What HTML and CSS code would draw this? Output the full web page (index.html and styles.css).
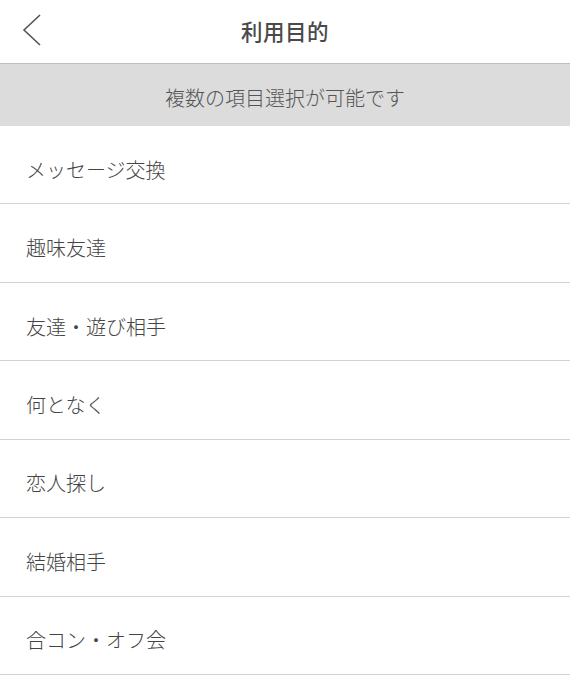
FILE: index.html
```html
<!DOCTYPE html>
<html lang="ja">
<head>
<meta charset="utf-8">
<link rel="stylesheet" href="styles.css">
</head>
<body>
<header class="nav">
  <svg class="back" width="24" height="34" viewBox="0 0 24 34"><path d="M20 2 L4 17 L20 32" fill="none" stroke="#555" stroke-width="1.6"/></svg>
  <h1 class="title">利用目的</h1>
</header>
<div class="note">複数の項目選択が可能です</div>
<ul class="list">
  <li class="item">メッセージ交換</li>
  <li class="item">趣味友達</li>
  <li class="item">友達・遊び相手</li>
  <li class="item">何となく</li>
  <li class="item">恋人探し</li>
  <li class="item">結婚相手</li>
  <li class="item">合コン・オフ会</li>
</ul>
</body>
</html>
```
FILE: styles.css
```css
html, body {
  margin: 0;
  padding: 0;
  background: #fff;
  font-family: "Noto Sans CJK JP", "Noto Sans", sans-serif;
  color: #444;
}
.nav {
  height: 63px;
  border-bottom: 1px solid #bdbdbd;
  display: flex;
  align-items: center;
  justify-content: center;
  position: relative;
}
.back {
  position: absolute;
  left: 20px;
  top: 13px;
}
.title {
  margin: 0 0 3px 0;
  font-size: 21.5px;
  font-weight: 500;
  color: #4a4a4a;
  letter-spacing: 0.5px;
}
.note {
  box-sizing: border-box;
  height: 62px;
  padding-top: 5px;
  background: #dcdcdc;
  display: flex;
  align-items: center;
  justify-content: center;
  font-size: 20px;
  font-weight: 300;
  color: #555;
}
.list {
  list-style: none;
  margin: 0;
  padding: 0;
}
.item {
  box-sizing: border-box;
  height: 78.45px;
  padding-top: 9px;
  border-bottom: 1px solid #d2d2d2;
  display: flex;
  align-items: center;
  padding-left: 26px;
  font-size: 20px;
  font-weight: 300;
  color: #444;
}
```
